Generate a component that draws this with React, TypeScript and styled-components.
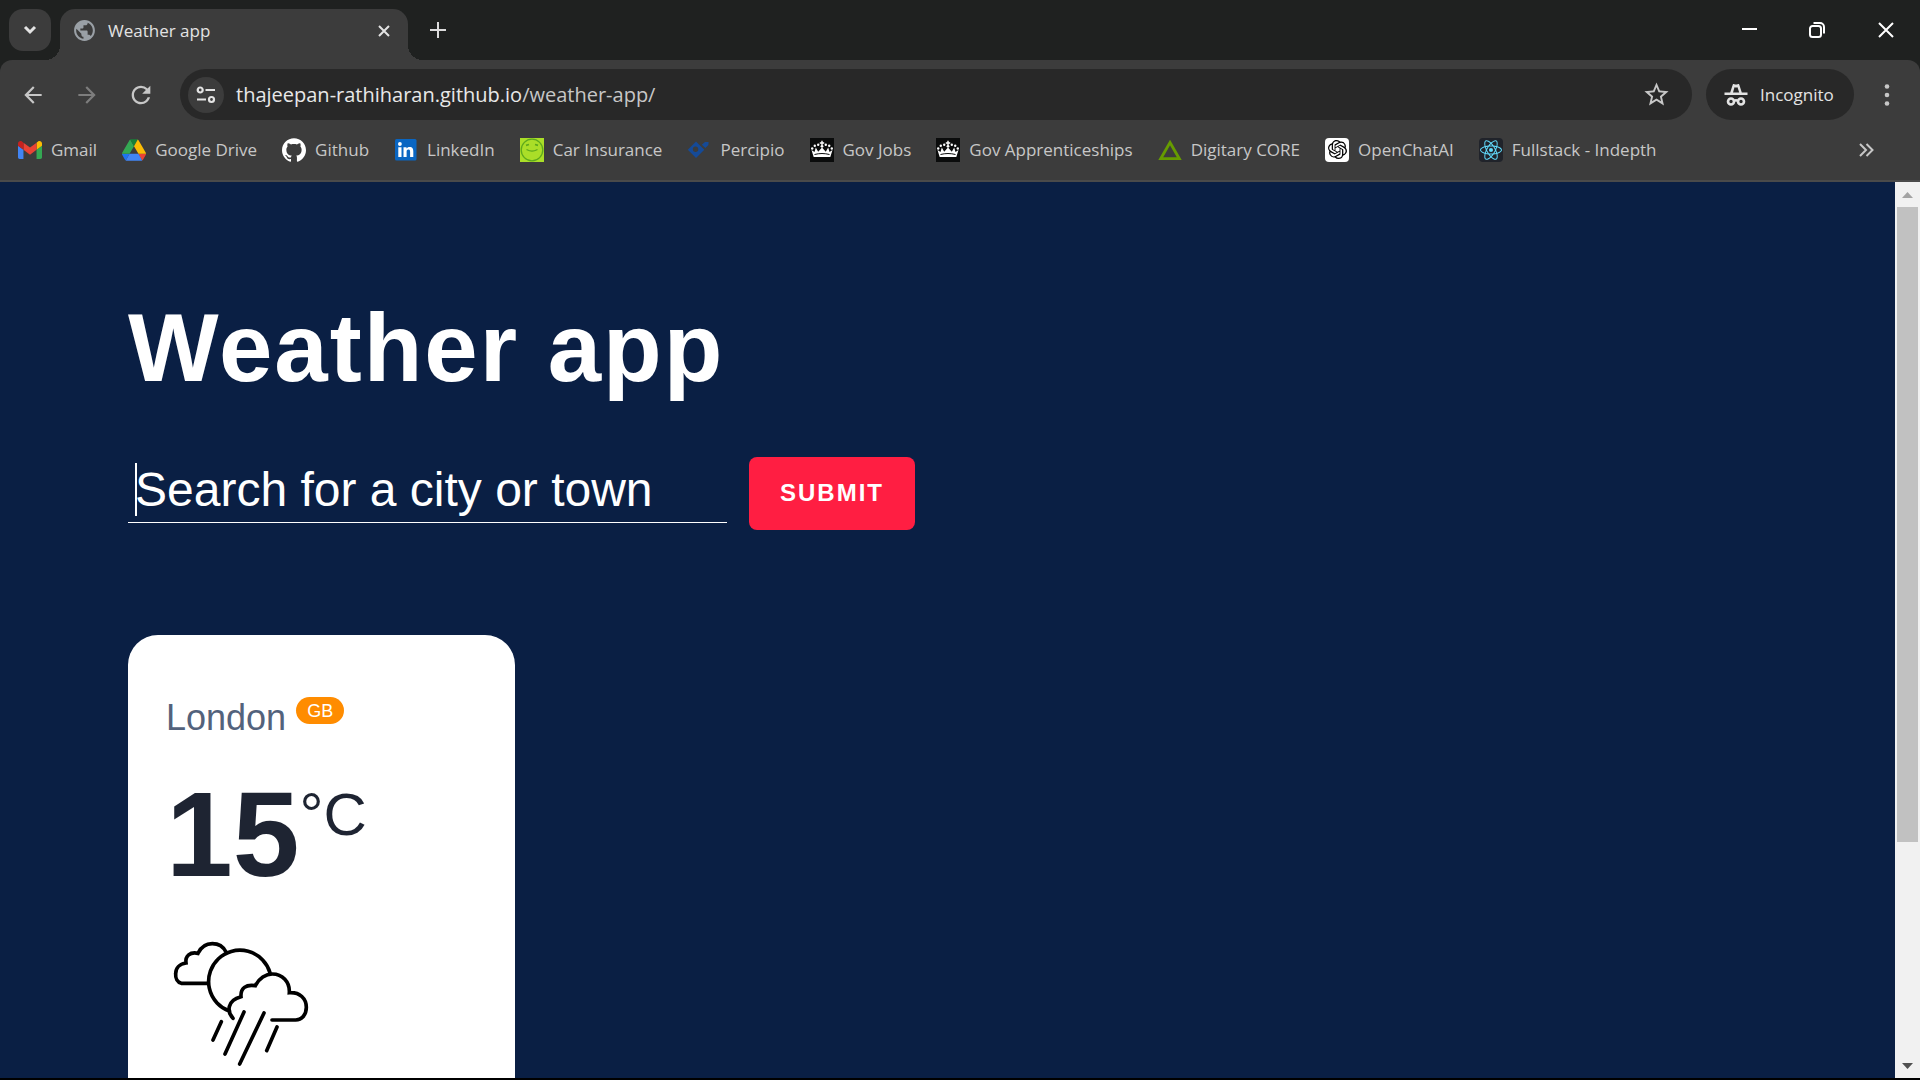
import React from "react";
import styled, { createGlobalStyle } from "styled-components";
import {
  MdArrowBack,
  MdArrowForward,
  MdPublic,
  MdRefresh,
  MdStarBorder,
} from "react-icons/md";
import { SiGithub, SiOpenai, SiReact } from "react-icons/si";

const colors = {
  frame: "#1f2120",
  bar: "#3c3c3c",
  field: "#282828",
  line: "#4a4a4a",
  chromeText: "#e3e3e3",
  chromeMuted: "#c7c7c7",
  navy: "#0a1f44",
  red: "#ff1e42",
  orange: "#ff8c00",
  slate: "#53627c",
  ink: "#1e2432",
};

const GlobalStyle = createGlobalStyle`
  *, *::before, *::after { box-sizing: border-box; }
  body { margin: 0; overflow: hidden; font-family: "Liberation Sans", Arial, sans-serif; }
  button, input { font: inherit; }
  h1, h2, p, ul { margin: 0; padding: 0; }
  svg { display: block; flex: none; }
`;

const Window = styled.div`
  height: 100vh;
  display: flex;
  flex-direction: column;
  background: ${colors.frame};
  border-bottom: 2px solid #000;
`;

const Chrome = styled.header`
  flex: none;
  font-family: "Open Sans", "Noto Sans", sans-serif;
  color: ${colors.chromeText};
`;

const TitleBar = styled.div`
  display: flex;
  align-items: flex-start;
  height: 60px;
  padding: 9px 0 0 9px;
`;

const PlainButton = styled.button<{ $width: number; $height: number; $color?: string }>`
  display: flex;
  align-items: center;
  justify-content: center;
  flex: none;
  width: ${(p) => p.$width}px;
  height: ${(p) => p.$height}px;
  padding: 0;
  border: 0;
  background: none;
  color: ${(p) => p.$color ?? colors.chromeMuted};
`;

const TabSearch = styled(PlainButton)`
  border-radius: 14px;
  background: ${colors.bar};
`;

const Tab = styled.div`
  position: relative;
  display: flex;
  align-items: center;
  width: 348px;
  height: 51px;
  margin-left: 9px;
  padding: 0 11px 8px 12px;
  border-radius: 15px 15px 0 0;
  background: ${colors.bar};

  &::before,
  &::after {
    content: "";
    position: absolute;
    bottom: 0;
    width: 15px;
    height: 15px;
  }
  &::before {
    right: 100%;
    background: radial-gradient(circle at 0 0, transparent 15px, ${colors.bar} 15px);
  }
  &::after {
    left: 100%;
    background: radial-gradient(circle at 100% 0, transparent 15px, ${colors.bar} 15px);
  }
`;

const TabTitle = styled.span`
  flex: 1;
  margin-left: 11px;
  font-size: 17px;
  line-height: 24px;
`;

const WindowControls = styled.div`
  display: flex;
  margin-left: auto;
`;

const Toolbar = styled.div`
  display: flex;
  align-items: center;
  height: 69px;
  padding: 0 12px 0 9px;
  border-radius: 12px 12px 0 0;
  background: ${colors.bar};
`;

const AddressBar = styled.div`
  flex: 1;
  display: flex;
  align-items: center;
  height: 51px;
  margin: 0 14px 0 15px;
  padding: 0 15px 0 8px;
  border-radius: 26px;
  background: ${colors.field};
`;

const SiteInfo = styled(PlainButton)`
  border-radius: 50%;
  background: ${colors.bar};
`;

const Url = styled.div`
  flex: 1;
  margin-left: 12px;
  font-size: 20px;
  line-height: 28px;
  color: ${colors.chromeMuted};
`;

const Host = styled.span`
  color: #e8e8e8;
`;

const IncognitoChip = styled.button`
  display: flex;
  align-items: center;
  gap: 12px;
  height: 51px;
  width: 148px;
  margin-right: 12px;
  padding: 0 0 0 18px;
  border: 0;
  border-radius: 26px;
  background: ${colors.field};
  color: ${colors.chromeText};
  font-size: 17px;
`;

const BookmarksBar = styled.nav`
  display: flex;
  align-items: center;
  justify-content: space-between;
  height: 53px;
  padding: 0 36px 10px 18px;
  border-bottom: 2px solid ${colors.line};
  background: ${colors.bar};
`;

const BookmarkList = styled.ul`
  display: flex;
  gap: 25px;
  list-style: none;
`;

const BookmarkLink = styled.a`
  display: flex;
  align-items: center;
  gap: 9px;
  color: ${colors.chromeMuted};
  font-size: 17px;
  line-height: 24px;
  white-space: nowrap;
  text-decoration: none;
`;

const Viewport = styled.div`
  flex: 1;
  min-height: 0;
  display: flex;
`;

const Page = styled.main`
  flex: 1;
  overflow: hidden;
  padding: 111px 128px 0;
  background: ${colors.navy};
  color: #fff;
`;

const Heading = styled.h1`
  font-size: 96px;
  line-height: 110px;
  font-weight: 700;
  letter-spacing: 2px;
`;

const SearchForm = styled.form`
  display: flex;
  align-items: center;
  gap: 22px;
  margin-top: 54px;
`;

const SearchField = styled.label`
  position: relative;
  width: 599px;
  padding-bottom: 2px;

  &::before {
    content: "";
    position: absolute;
    left: 7px;
    top: 1px;
    width: 2px;
    height: 53px;
    background: #fff;
  }
`;

const SearchInput = styled.input`
  display: block;
  width: 100%;
  padding: 0 7px 5px;
  border: 0;
  border-bottom: 1px solid #fff;
  background: none;
  color: #fff;
  font-size: 48px;
  line-height: 55px;
  outline: 0;

  &::placeholder {
    color: #fff;
    opacity: 1;
  }
`;

const SubmitButton = styled.button`
  height: 73px;
  padding: 0 31px 2px;
  border: 0;
  border-radius: 8px;
  background: ${colors.red};
  color: #fff;
  font-size: 24px;
  font-weight: 700;
  letter-spacing: 2px;
  text-transform: uppercase;
`;

const Cities = styled.ul`
  display: flex;
  margin-top: 105px;
  list-style: none;
`;

const CityCard = styled.li`
  width: 387px;
  padding: 62px 38px 60px;
  border-radius: 30px;
  background: #fff;
  color: ${colors.ink};
`;

const CityName = styled.h2`
  display: flex;
  align-items: flex-start;
  gap: 10px;
  font-size: 36px;
  line-height: 41px;
  font-weight: 400;
  color: ${colors.slate};
`;

const CountryBadge = styled.span`
  padding: 1px 11px 0;
  border-radius: 14px;
  background: ${colors.orange};
  color: #fff;
  font-size: 18px;
  line-height: 26px;
`;

const Temperature = styled.p`
  display: flex;
  align-items: flex-start;
  margin: 36px 0 35px;
  font-size: 120px;
  line-height: 120px;
  font-weight: 700;
`;

const Unit = styled.span`
  font-size: 60px;
  line-height: 82px;
  font-weight: 400;
`;

const Scrollbar = styled.div`
  display: flex;
  flex-direction: column;
  width: 25px;
  background: #f1f1f1;
`;

const Track = styled.div`
  flex: 1;
  padding: 0 2px;
`;

const Thumb = styled.div`
  height: 75%;
  background: #c1c1c1;
`;

const GmailIcon = () => (
  <svg width="24" height="24" viewBox="52 42 88 66" aria-hidden="true">
    <path fill="#4285f4" d="M58 108h14V74L52 59v43c0 3.320 2.690 6 6 6" />
    <path fill="#34a853" d="M120 108h14c3.320 0 6-2.690 6-6V59l-20 15" />
    <path fill="#fbbc04" d="M120 48v26l20-15v-8c0-7.420-8.470-11.650-14.400-7.200" />
    <path fill="#ea4335" d="M72 74V48l24 18 24-18v26L96 92" />
    <path fill="#c5221f" d="M52 51v8l20 15V48l-5.600-4.200c-5.940-4.450-14.400-.22-14.400 7.200" />
  </svg>
);

const DriveIcon = () => (
  <svg width="24" height="22" viewBox="0 0 87.3 78" aria-hidden="true">
    <path fill="#1e74f0" d="m6.600 66.850 3.850 6.650c.8 1.400 1.950 2.500 3.300 3.300l13.750-23.800h-27.500c0 1.550.4 3.100 1.200 4.500z" />
    <path fill="#34a853" d="m43.650 25-13.750-23.800c-1.350.8-2.500 1.900-3.300 3.300l-25.400 44a9.060 9.060 0 0 0-1.200 4.500h27.500z" />
    <path fill="#ea4335" d="m73.550 76.800c1.350-.8 2.500-1.900 3.300-3.300l1.600-2.750 7.650-13.250c.8-1.400 1.200-2.950 1.200-4.500h-27.500l5.850 11.500z" />
    <path fill="#188038" d="m43.650 25 13.750-23.800c-1.350-.8-2.900-1.200-4.500-1.200h-18.500c-1.600 0-3.150.45-4.500 1.200z" />
    <path fill="#4285f4" d="m59.800 53h-32.300l-13.750 23.800c1.350.8 2.900 1.200 4.500 1.200h50.800c1.600 0 3.150-.45 4.500-1.200z" />
    <path fill="#fbbc04" d="m73.400 26.500-12.700-22c-.8-1.400-1.950-2.500-3.300-3.300l-13.750 23.800 16.150 28h27.450c0-1.550-.4-3.100-1.200-4.500z" />
  </svg>
);

const LinkedInIcon = () => (
  <svg width="24" height="24" viewBox="0 0 24 24" aria-hidden="true">
    <rect x="1" y="1" width="21.500" height="21.500" rx="1.500" fill="#0a66c2" />
    <g fill="#fff">
      <circle cx="5.900" cy="6" r="1.900" />
      <path d="M4.300 9.200H7.500V19H4.300zM9.500 9.200h3v1.400c.6-1 1.700-1.700 3.100-1.700 3 0 3.700 2 3.700 4.600V19h-3.200v-4.900c0-1.200-.1-2.600-1.600-2.600-1.700 0-1.900 1.200-1.900 2.500v5H9.500z" />
    </g>
  </svg>
);

const SmileyIcon = () => (
  <svg width="24" height="24" viewBox="0 0 24 24" aria-hidden="true">
    <rect width="24" height="24" fill="#aade28" />
    <g fill="none" stroke="#5da81c" strokeWidth="1.300">
      <circle cx="12" cy="12" r="10.800" />
      <path d="M7 11.800c3 1.600 7 1.600 10 0" strokeLinecap="round" />
      <path d="M6 7.300l3-.8M15 6.500l3 .8" strokeWidth="1.800" />
    </g>
  </svg>
);

const PercipioIcon = () => (
  <svg width="24" height="24" viewBox="0 0 24 24" aria-hidden="true">
    <path
      fill="#154a97"
      fillRule="evenodd"
      d="M9 3.600l8.300 8.200L9 20 .8 11.800zM8.500 8.600a2.700 2.700 0 1 0 .1 5.400 2.700 2.700 0 0 0-.1-5.400zM14.800 6.800L18 4h3.600l-.2 3.100-3 3z"
    />
  </svg>
);

const CrownIcon = () => (
  <svg width="24" height="24" viewBox="0 0 24 24" aria-hidden="true">
    <rect width="24" height="24" fill="#0b0c0c" />
    <g fill="#fff">
      <path d="M11.300 2.800h1.400v1.500h1.500v1.400h-1.500v1.600h-1.400V5.700H9.800V4.300h1.500z" />
      <circle cx="12" cy="8.300" r="1.400" />
      <circle cx="8.200" cy="6.800" r="1.200" />
      <circle cx="15.800" cy="6.800" r="1.200" />
      <circle cx="4.800" cy="7.800" r="1.200" />
      <circle cx="19.200" cy="7.800" r="1.200" />
      <circle cx="2.200" cy="10.500" r="1.200" />
      <circle cx="21.800" cy="10.500" r="1.200" />
      <path d="M1.500 12l3 2 1.300-4.500 2.400 4.200L12 9.500l3.800 4.200 2.400-4.200 1.300 4.500 3-2-2.200 7H3.700z" />
    </g>
    <path d="M4.500 16.500c5-1.300 10-1.300 15 0" stroke="#0b0c0c" fill="none" />
  </svg>
);

const TriangleIcon = () => (
  <svg width="24" height="24" viewBox="0 0 24 24" aria-hidden="true">
    <path d="M12 4.500l9.300 16.200H2.700z" fill="none" stroke="#669c00" strokeWidth="2.800" />
  </svg>
);

const OpenAiTile = styled.span`
  display: grid;
  place-items: center;
  width: 24px;
  height: 24px;
  border-radius: 4px;
  background: #fff;
  color: #000;
`;

const ReactTile = styled(OpenAiTile)`
  background: #20232a;
  color: #61dafb;
`;

const IncognitoIcon = () => (
  <svg width="24" height="24" viewBox="0 0 24 24" aria-hidden="true">
    <path
      d="M8.800 1.500c.5-.6 1-.5 1.500-.3.600.3 1.200.4 1.700.4s1.100-.1 1.700-.4c.5-.2 1-.3 1.500.3l2.600 8H23.500v2.600H.5V9.500h5.700zm.2 8h6.200L13.500 4.200c-1 .3-2 .3-3 0z"
      fill="currentColor"
      fillRule="evenodd"
    />
    <g fill="none" stroke="currentColor" strokeWidth="2.600">
      <circle cx="7" cy="18.500" r="3" />
      <circle cx="17" cy="18.500" r="3" />
      <path d="M10 17.800c1.300-.7 2.700-.7 4 0" />
    </g>
  </svg>
);

const SiteSettingsIcon = () => (
  <svg width="20" height="18" viewBox="0 0 20 18" aria-hidden="true">
    <g fill="none" stroke="#e3e3e3" strokeWidth="2.200">
      <circle cx="4.200" cy="4" r="2.500" />
      <path d="M9.500 4H19M1 13.500h9" />
      <circle cx="15.500" cy="13.500" r="2.500" />
    </g>
  </svg>
);

type StrokeIconProps = { size: number; d: string; width: number };

const StrokeIcon = ({ size, d, width }: StrokeIconProps) => (
  <svg width={size} height={size} viewBox={`0 0 ${size} ${size}`} aria-hidden="true">
    <path d={d} fill="none" stroke="currentColor" strokeWidth={width} />
  </svg>
);

const ArrowGlyph = ({ down }: { down?: boolean }) => (
  <svg width="11" height="6" viewBox="0 0 11 6" aria-hidden="true">
    <path d={down ? "M0 0h11L5.500 6z" : "M0 6h11L5.500 0z"} fill={down ? "#505050" : "#a3a3a3"} />
  </svg>
);

const CloudRainIcon = () => (
  <svg width="150" height="150" viewBox="168 87 450 450" role="img" aria-label="Light rain">
    <g fill="none" stroke="#000" strokeWidth="11" strokeLinecap="round" strokeLinejoin="miter">
      <path d="M293 250H214C202 247 196 235 197 221C197 205 208 192 228 189C225 168 240 155 264 160C273 141 289 131 307 131C325 131 340 140 348 156" />
      <path d="M358 333A94 94 0 1 1 480 218" />
      <path d="M369 355C351 336 350 301 393 290C391 265 408 252 436 257C447 235 468 222 487 222C517 222 540 246 538 278C570 276 589 296 589 322C589 345 575 360 557 360H486" />
      <path d="M334 365L309 420M402 336L345 462M462 339L389 492M501 381L470 452" />
    </g>
  </svg>
);

const bookmarks: { label: string; icon: React.ReactNode }[] = [
  { label: "Gmail", icon: <GmailIcon /> },
  { label: "Google Drive", icon: <DriveIcon /> },
  { label: "Github", icon: <SiGithub size={24} color="#fff" /> },
  { label: "LinkedIn", icon: <LinkedInIcon /> },
  { label: "Car Insurance", icon: <SmileyIcon /> },
  { label: "Percipio", icon: <PercipioIcon /> },
  { label: "Gov Jobs", icon: <CrownIcon /> },
  { label: "Gov Apprenticeships", icon: <CrownIcon /> },
  { label: "Digitary CORE", icon: <TriangleIcon /> },
  { label: "OpenChatAI", icon: <OpenAiTile><SiOpenai size={19} /></OpenAiTile> },
  { label: "Fullstack - Indepth", icon: <ReactTile><SiReact size={22} /></ReactTile> },
];

const BrowserChrome = () => (
  <Chrome>
    <TitleBar>
      <TabSearch $width={42} $height={42} $color="#e3e3e3" aria-label="Search tabs">
        <StrokeIcon size={14} width={3} d="M2 4l5 5 5-5" />
      </TabSearch>
      <Tab>
        <MdPublic size={25} color="#9aa0a6" />
        <TabTitle>Weather app</TabTitle>
        <PlainButton $width={26} $height={26} $color="#e3e3e3" aria-label="Close tab">
          <StrokeIcon size={14} width={2} d="M2 2l10 10M12 2L2 12" />
        </PlainButton>
      </Tab>
      <PlainButton $width={60} $height={42} $color="#dcdcdc" aria-label="New tab">
        <StrokeIcon size={16} width={2} d="M8 0v16M0 8h16" />
      </PlainButton>
      <WindowControls>
        <PlainButton $width={68} $height={41} $color="#fff" aria-label="Minimise">
          <StrokeIcon size={15} width={2} d="M0 7h15" />
        </PlainButton>
        <PlainButton $width={68} $height={41} $color="#fff" aria-label="Restore">
          <StrokeIcon
            size={16}
            width={2}
            d="M3.500 4h6a2.500 2.500 0 0 1 2.500 2.500v6a2.500 2.500 0 0 1-2.500 2.500h-6A2.500 2.500 0 0 1 1 12.500v-6A2.500 2.500 0 0 1 3.500 4zM4.500 1h6.500a4 4 0 0 1 4 4v6.500"
          />
        </PlainButton>
        <PlainButton $width={69} $height={41} $color="#fff" aria-label="Close">
          <StrokeIcon size={16} width={2} d="M1 1l14 14M15 1L1 15" />
        </PlainButton>
      </WindowControls>
    </TitleBar>
    <Toolbar>
      <PlainButton $width={48} $height={48} aria-label="Back"><MdArrowBack size={26} /></PlainButton>
      <PlainButton $width={60} $height={48} $color="#7d7d7d" aria-label="Forward"><MdArrowForward size={26} /></PlainButton>
      <PlainButton $width={48} $height={48} aria-label="Reload"><MdRefresh size={28} /></PlainButton>
      <AddressBar>
        <SiteInfo $width={36} $height={36} aria-label="View site information"><SiteSettingsIcon /></SiteInfo>
        <Url><Host>thajeepan-rathiharan.github.io</Host>/weather-app/</Url>
        <PlainButton $width={42} $height={42} aria-label="Bookmark this tab"><MdStarBorder size={29} /></PlainButton>
      </AddressBar>
      <IncognitoChip><IncognitoIcon />Incognito</IncognitoChip>
      <PlainButton $width={42} $height={42} aria-label="Menu">
        <svg width="6" height="24" viewBox="0 0 6 24" fill="currentColor" aria-hidden="true">
          <circle cx="3" cy="3.500" r="2.300" />
          <circle cx="3" cy="12" r="2.300" />
          <circle cx="3" cy="20.500" r="2.300" />
        </svg>
      </PlainButton>
    </Toolbar>
    <BookmarksBar aria-label="Bookmarks">
      <BookmarkList>
        {bookmarks.map((b) => (
          <li key={b.label}>
            <BookmarkLink href="#">{b.icon}{b.label}</BookmarkLink>
          </li>
        ))}
      </BookmarkList>
      <PlainButton $width={36} $height={24} aria-label="More bookmarks">
        <StrokeIcon size={16} width={2} d="M2 2l6 6-6 6M8.500 2l6 6-6 6" />
      </PlainButton>
    </BookmarksBar>
  </Chrome>
);

export default function App() {
  return (
    <>
      <GlobalStyle />
      <Window>
        <BrowserChrome />
        <Viewport>
          <Page>
            <Heading>Weather app</Heading>
            <SearchForm onSubmit={(e) => e.preventDefault()}>
              <SearchField>
                <SearchInput type="text" placeholder="Search for a city or town" aria-label="Search for a city or town" />
              </SearchField>
              <SubmitButton type="submit">Submit</SubmitButton>
            </SearchForm>
            <Cities>
              <CityCard>
                <CityName>
                  London
                  <CountryBadge>GB</CountryBadge>
                </CityName>
                <Temperature>
                  15
                  <Unit>°C</Unit>
                </Temperature>
                <CloudRainIcon />
              </CityCard>
            </Cities>
          </Page>
          <Scrollbar>
            <PlainButton $width={25} $height={25} aria-label="Scroll up"><ArrowGlyph /></PlainButton>
            <Track>
              <Thumb />
            </Track>
            <PlainButton $width={25} $height={25} aria-label="Scroll down"><ArrowGlyph down /></PlainButton>
          </Scrollbar>
        </Viewport>
      </Window>
    </>
  );
}
